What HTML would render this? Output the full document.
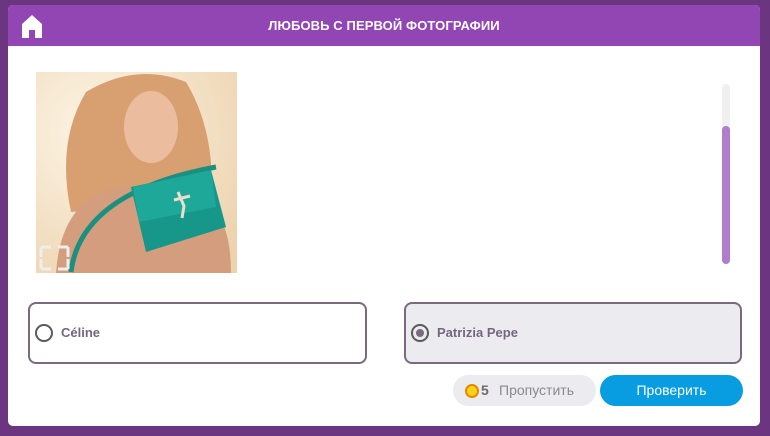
<!DOCTYPE html>
<html><head><meta charset="utf-8"><style>
*{margin:0;padding:0;box-sizing:border-box}
body{width:770px;height:436px;overflow:hidden;background:#6b3580;font-family:"Liberation Sans",sans-serif;position:relative}
.card{position:absolute;left:8px;top:5px;width:752px;height:421px;background:#fff;border-radius:5px;overflow:hidden}
.hdr{position:absolute;left:0;top:0;width:100%;height:41px;background:#9146b4;color:#fff;font-weight:bold;font-size:13px;text-align:center;line-height:41px;letter-spacing:0.1px}
.opt{position:absolute;top:297px;height:62px;border:2px solid #7a6a7e;border-radius:8px;font-size:13px;font-weight:bold;color:#756680}
.opt .r{position:absolute;left:5px;top:20px;width:18px;height:18px;border:2px solid #5a5a5a;border-radius:50%}
.opt .t{position:absolute;left:31px;top:21px}
.btn{position:absolute;top:370px;height:31px;border-radius:16px;font-size:14px;line-height:31px;text-align:center}
</style></head><body>
<div class="card">
<div class="hdr">ЛЮБОВЬ С ПЕРВОЙ ФОТОГРАФИИ
<svg style="position:absolute;left:13px;top:9px" width="22" height="24" viewBox="0 0 22 24"><path d="M11 1 L21 10 V24 H14 V16 H8 V24 H1 V10 Z" fill="#fff"/></svg></div>
<svg style="position:absolute;left:28px;top:67px" width="201" height="201" viewBox="0 0 201 201">
<defs><radialGradient id="bg" cx="0.3" cy="0.3" r="0.9"><stop offset="0" stop-color="#fdf5e6"/><stop offset="1" stop-color="#ecd2ad"/></radialGradient></defs>
<rect width="201" height="201" fill="url(#bg)"/>
<path d="M50 20 Q100 -10 150 10 Q180 60 175 130 L35 140 Q20 70 50 20Z" fill="#d8a070"/>
<ellipse cx="115" cy="55" rx="27" ry="36" fill="#ebbd9e"/>
<path d="M20 201 Q25 125 85 115 L150 115 Q195 130 195 201Z" fill="#d49e7e"/>
<path d="M35 200 Q45 120 180 95" stroke="#1b8f80" stroke-width="5" fill="none"/>
<path d="M95 115 L175 98 L190 155 L110 180Z" fill="#16978a"/>
<path d="M97 115 L175 98 L180 135 L103 150Z" fill="#1da89a"/>
<path d="M142 120 l6 14 l-2 12 M138 128 l16 -4" stroke="#eadfc8" stroke-width="3" fill="none"/>
<path d="M5 175 h10 M5 175 v10 M32 175 h-10 M32 175 v10 M5 197 h10 M5 197 v-10 M32 197 h-10 M32 197 v-10" stroke="#eee" stroke-width="3" fill="none"/>
</svg>
<div style="position:absolute;left:714px;top:79px;width:8px;height:180px;background:#f0f0f0;border-radius:4px"></div>
<div style="position:absolute;left:714px;top:121px;width:8px;height:138px;background:#b07ccc;border-radius:4px"></div>
<div class="opt" style="left:20px;width:339px;background:#fff"><div class="r"></div><div class="t">Céline</div></div>
<div class="opt" style="left:396px;width:338px;background:#ecebef"><div class="r"><div style="position:absolute;left:3px;top:3px;width:8px;height:8px;border-radius:50%;background:#7a6a7e"></div></div><div class="t">Patrizia Pepe</div></div>
<div class="btn" style="left:445px;width:143px;background:#ecebef;color:#8a8a8a"><span style="position:absolute;left:12px;top:9px;width:14px;height:14px;border-radius:50%;background:#ffd21a;border:2px solid #e08a00"></span><b style="position:absolute;left:28px;color:#6a6a6a">5</b><span style="position:absolute;left:46px">Пропустить</span></div>
<div class="btn" style="left:592px;width:143px;background:#079de0;color:#fff">Проверить</div>
</div>
</body></html>
